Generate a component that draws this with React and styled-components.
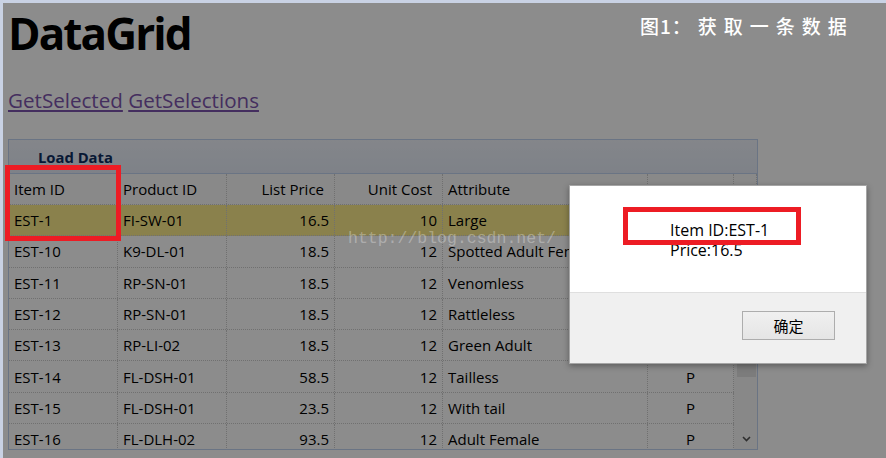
import styled, { createGlobalStyle } from "styled-components";

const GlobalStyle = createGlobalStyle`
  html, body {
    margin: 0;
    padding: 0;
    background: #c9d2e4;
    overflow: hidden;
  }
  * { box-sizing: border-box; }
`;

const rows = [
  ["EST-1", "FI-SW-01", "16.5", "10", "Large", "P"],
  ["EST-10", "K9-DL-01", "18.5", "12", "Spotted Adult Female", "P"],
  ["EST-11", "RP-SN-01", "18.5", "12", "Venomless", "P"],
  ["EST-12", "RP-SN-01", "18.5", "12", "Rattleless", "P"],
  ["EST-13", "RP-LI-02", "18.5", "12", "Green Adult", "P"],
  ["EST-14", "FL-DSH-01", "58.5", "12", "Tailless", "P"],
  ["EST-15", "FL-DSH-01", "23.5", "12", "With tail", "P"],
  ["EST-16", "FL-DLH-02", "93.5", "12", "Adult Female", "P"],
];

const columns = [
  { title: "Item ID", align: "left" },
  { title: "Product ID", align: "left" },
  { title: "List Price", align: "right" },
  { title: "Unit Cost", align: "right" },
  { title: "Attribute", align: "left" },
  { title: "Status", align: "center" },
];

const App = () => {
  return (
    <Frame>
      <GlobalStyle />
      <Page>
        <Title>DataGrid</Title>
        <LinkBar>
          <Link href="#">GetSelected</Link> <Link href="#">GetSelections</Link>
        </LinkBar>
        <Panel>
          <PanelHeader>Load Data</PanelHeader>
          <HeaderRow>
            {columns.map((c) => (
              <HeaderCell key={c.title} $align={c.align}>
                {c.title}
              </HeaderCell>
            ))}
            <HeaderCell />
          </HeaderRow>
          <Body>
            <Rows>
              {rows.map((r, i) => (
                <Row key={r[0]} $selected={i === 0}>
                  {r.map((v, j) => (
                    <Cell key={j} $align={columns[j].align}>
                      {/* rows 0-4 of the status column sit under the dialog */}
                      {j === 5 && i < 5 ? "" : v}
                    </Cell>
                  ))}
                </Row>
              ))}
            </Rows>
            <Scrollbar>
              <Arrow>
                <svg width="9" height="6" viewBox="0 0 9 6">
                  <path d="M1 5 L4.5 1.5 L8 5" fill="none" stroke="#555" strokeWidth="1.6" />
                </svg>
              </Arrow>
              <Track>
                <Thumb />
              </Track>
              <Arrow>
                <svg width="9" height="6" viewBox="0 0 9 6">
                  <path d="M1 1 L4.5 4.5 L8 1" fill="none" stroke="#555" strokeWidth="1.6" />
                </svg>
              </Arrow>
            </Scrollbar>
          </Body>
        </Panel>
        <Mask />
      </Page>

      <Caption>
        <span>图1：</span>
        <CaptionRest>获取一条数据</CaptionRest>
      </Caption>
      <Watermark>http://blog.csdn.net/</Watermark>

      <Dialog>
        <DialogBody>
          <div>Item ID:EST-1</div>
          <div>Price:16.5</div>
        </DialogBody>
        <DialogFooter>
          <OkButton>确定</OkButton>
        </DialogFooter>
      </Dialog>

      <RedBox $left={5} $top={165} $w={116} $h={76} />
      <RedBox $left={623} $top={207} $w={178} $h={38} />
    </Frame>
  );
};

export default App;

const Frame = styled.div`
  position: relative;
  width: 886px;
  height: 458px;
  overflow: hidden;
  font-family: "Open Sans", "Noto Sans CJK SC", sans-serif;
`;

const Page = styled.div`
  position: relative;
  margin: 3px 0 0 3px;
  height: 455px;
  padding: 0 5px;
  background: #fff;
  overflow: hidden;
`;

const Title = styled.h1`
  margin: 5px 0 0;
  font-size: 44px;
  line-height: 50px;
  font-weight: 700;
  letter-spacing: -1.9px;
  color: #000;
`;

const LinkBar = styled.div`
  margin-top: 28px;
  font-size: 20.6px;
  line-height: 28px;
`;

const Link = styled.a`
  color: #7d55ad;
  text-decoration: underline;
`;

const Panel = styled.div`
  margin-top: 25px;
  width: 750px;
  border: 1px solid #c2d3f0;
  background: #fff;
`;

const PanelHeader = styled.div`
  height: 34px;
  padding-left: 29px;
  display: flex;
  align-items: center;
  font-size: 14.8px;
  font-weight: 700;
  color: #0e2d5f;
  background: linear-gradient(#f0f4fc, #e6ecf7);
  border-bottom: 1px solid #c2d3f0;
`;

const gridCols = "109px 109px 108px 108px 205px 86px 23px";

const HeaderRow = styled.div`
  display: grid;
  grid-template-columns: ${gridCols};
  height: 31px;
  background: #fafafa;
  border-bottom: 1px dotted #ccc;
`;

const HeaderCell = styled.div`
  display: flex;
  align-items: center;
  justify-content: ${(p) =>
    p.$align === "right" ? "flex-end" : p.$align === "center" ? "center" : "flex-start"};
  padding: 0 ${(p) => (p.$align === "right" ? "10px" : "5px")} 0 5px;
  font-size: 15px;
  color: #000;
  border-right: 1px dotted #ccc;
  white-space: nowrap;
  overflow: hidden;
`;

const Body = styled.div`
  display: flex;
  height: 244px;
  overflow: hidden;
`;

const Rows = styled.div`
  width: 725px;
`;

const Row = styled.div`
  display: grid;
  grid-template-columns: 109px 109px 108px 108px 205px 86px;
  height: 31.3px;
  background: ${(p) => (p.$selected ? "#fcec8a" : "#fff")};
  border-bottom: 1px dotted #ccc;
`;

const Cell = styled.div`
  display: flex;
  align-items: center;
  justify-content: ${(p) =>
    p.$align === "right" ? "flex-end" : p.$align === "center" ? "center" : "flex-start"};
  padding: 0 5px;
  font-size: 15px;
  color: #000;
  border-right: 1px dotted #ccc;
  white-space: nowrap;
  overflow: hidden;
`;

const Scrollbar = styled.div`
  width: 23px;
  display: flex;
  flex-direction: column;
  background: #f8f8f8;
  padding: 0 1px 0 3px;
`;

const Arrow = styled.div`
  height: 20px;
  display: flex;
  align-items: center;
  justify-content: center;
`;

const Track = styled.div`
  flex: 1;
`;

const Thumb = styled.div`
  height: 172px;
  margin-top: -20px;
  background: #e2e2e2;
`;

const Mask = styled.div`
  position: absolute;
  inset: 0;
  background: rgba(0, 0, 0, 0.45);
`;

const Caption = styled.div`
  position: absolute;
  left: 640px;
  top: 12px;
  display: flex;
  font-family: "Noto Sans CJK SC", sans-serif;
  font-size: 19px;
  font-weight: 500;
  line-height: 28px;
  color: #fff;
  letter-spacing: 1px;
`;

const CaptionRest = styled.span`
  margin-left: 6px;
  letter-spacing: 7px;
`;

const Watermark = styled.div`
  position: absolute;
  left: 348px;
  top: 228px;
  font-family: "Liberation Mono", monospace;
  font-size: 16.5px;
  line-height: 22px;
  color: rgba(255, 255, 255, 0.3);
`;

const Dialog = styled.div`
  position: absolute;
  left: 569px;
  top: 185px;
  width: 298px;
  height: 179px;
  display: flex;
  flex-direction: column;
  background: #fff;
  border: 1px solid #a5a5a5;
  box-shadow: 0 2px 6px rgba(0, 0, 0, 0.35);
`;

const DialogBody = styled.div`
  height: 107px;
  padding: 34px 0 0 100px;
  font-size: 16px;
  line-height: 20px;
  color: #000;
  border-bottom: 1px solid #dfdfdf;
`;

const DialogFooter = styled.div`
  flex: 1;
  display: flex;
  justify-content: flex-end;
  align-items: flex-start;
  padding: 18px 31px 0 0;
  background: #f0f0f0;
`;

const OkButton = styled.button`
  width: 93px;
  height: 29px;
  border: 1px solid #adadad;
  background: linear-gradient(#f0f0f0, #e5e5e5);
  font-family: "Noto Sans CJK SC", sans-serif;
  font-size: 15px;
  color: #000;
  padding: 0;
`;

const RedBox = styled.div`
  position: absolute;
  left: ${(p) => p.$left}px;
  top: ${(p) => p.$top}px;
  width: ${(p) => p.$w}px;
  height: ${(p) => p.$h}px;
  border: 5px solid #ed1c24;
`;
